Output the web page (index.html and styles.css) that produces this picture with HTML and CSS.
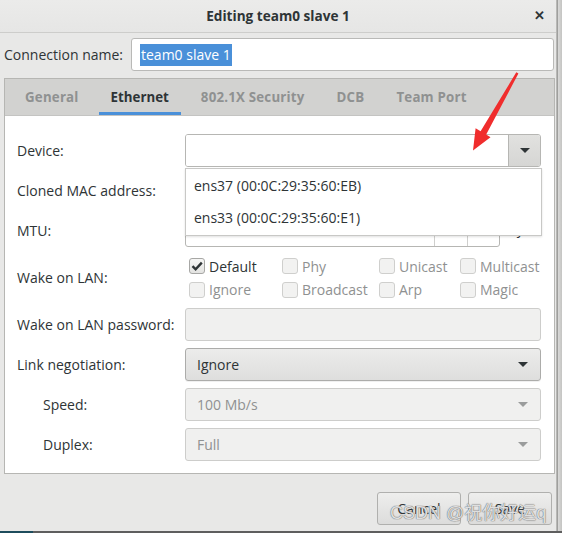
FILE: index.html
```html
<!DOCTYPE html>
<html>
<head>
<meta charset="utf-8">
<link rel="stylesheet" href="styles.css">
</head>
<body>
<div class="screen">
  <div class="window">
    <header class="titlebar">
      <span class="title">Editing team0 slave 1</span>
      <span class="close">✕</span>
    </header>
    <div class="body">
      <div class="conn-row">
        <span class="conn-label">Connection name:</span>
        <div class="entry name-entry"><span class="sel">team0 slave 1</span></div>
      </div>
      <div class="notebook">
        <div class="tabs">
          <span class="tab">General</span>
          <span class="tab active">Ethernet</span>
          <span class="tab">802.1X Security</span>
          <span class="tab">DCB</span>
          <span class="tab">Team Port</span>
        </div>
        <div class="page">
          <div class="form">
            <span class="lbl">Device:</span>
            <div class="combo-wrap">
              <div class="combo-entry">
                <div class="ce-text"></div>
                <div class="ce-btn"><span class="arrow"></span></div>
              </div>
              <div class="popup">
                <div class="item">ens37 (00:0C:29:35:60:EB)</div>
                <div class="item">ens33 (00:0C:29:35:60:E1)</div>
              </div>
            </div>

            <span class="lbl">Cloned MAC address:</span>
            <div class="entry plain"></div>

            <span class="lbl">MTU:</span>
            <div class="mtu">
              <div class="spin">
                <div class="spin-text"></div>
                <div class="spin-btn"></div>
                <div class="spin-btn"></div>
              </div>
              <span class="unit">bytes</span>
            </div>

            <span class="lbl">Wake on LAN:</span>
            <div class="checks">
              <label class="chk on"><span class="box"><svg viewBox="0 0 16 16" width="16" height="16"><path d="M3.5 8.2 L6.6 11.3 L12.8 4.6" fill="none" stroke="#2e3436" stroke-width="2.4"/></svg></span>Default</label>
              <label class="chk off"><span class="box"></span>Phy</label>
              <label class="chk off"><span class="box"></span>Unicast</label>
              <label class="chk off"><span class="box"></span>Multicast</label>
              <label class="chk off"><span class="box"></span>Ignore</label>
              <label class="chk off"><span class="box"></span>Broadcast</label>
              <label class="chk off"><span class="box"></span>Arp</label>
              <label class="chk off"><span class="box"></span>Magic</label>
            </div>

            <span class="lbl">Wake on LAN password:</span>
            <div class="entry disabled"></div>

            <span class="lbl">Link negotiation:</span>
            <div class="combo active-combo"><span>Ignore</span><span class="arrow"></span></div>

            <span class="lbl sub">Speed:</span>
            <div class="combo dis-combo"><span>100 Mb/s</span><span class="arrow"></span></div>

            <span class="lbl sub">Duplex:</span>
            <div class="combo dis-combo"><span>Full</span><span class="arrow"></span></div>
          </div>
        </div>
      </div>
      <div class="actions">
        <div class="btn">Cancel</div>
        <div class="btn">Save</div>
      </div>
    </div>
    <div class="watermark">CSDN @祝你好运q</div>
    <svg class="annot" width="562" height="533" viewBox="0 0 562 533">
      <path d="M516.3 72.3 L518.4 73.6 L486.2 134.4 L490.5 137.2 L473 150.5 L475.6 128.2 L480.6 131.2 Z" fill="#f02d2d"/>
    </svg>
  </div>
  <div class="edge"></div>
</div>
<div class="bottom-strip"><span class="teal"></span></div>
</body>
</html>
```

FILE: styles.css
```css
* { box-sizing: border-box; }
html, body { margin: 0; padding: 0; }
body {
  width: 562px;
  height: 533px;
  overflow: hidden;
  background: #cfcfcf;
  font-family: "Open Sans", "Noto Sans", "Noto Sans CJK SC", sans-serif;
  font-size: 14px;
  color: #2e3436;
}
.screen { display: flex; height: 531px; }
.window {
  position: relative;
  width: 557px;
  height: 531px;
  background: #e8e8e7;
  border-right: 1px solid #b8b8b6;
}
.edge {
  width: 5px;
  background: linear-gradient(to right, #d9d9d8, #c4c4c2);
  border-left: 1px solid #9f9f9d;
}
.bottom-strip {
  height: 2px;
  background: #5e5e5e;
  display: flex;
}
.bottom-strip .teal { width: 33px; background: #1d4c5c; }

.titlebar {
  height: 33px;
  border-bottom: 1px solid #cdcdcb;
  background: linear-gradient(#ebebea, #e6e6e5);
  display: flex;
  align-items: center;
  justify-content: center;
  position: relative;
}
.title { font-weight: 700; font-size: 13.6px; color: #2e3436; margin-top: -2px; }
.close {
  position: absolute;
  right: 11px;
  top: 6px;
  font-size: 13px;
  font-weight: 700;
  color: #2e3436;
}

.body { padding: 5px 2px 0 4px; }

.conn-row { display: flex; align-items: center; height: 33px; }
.conn-label { width: 127px; }
.entry {
  background: #fff;
  border: 1px solid #b9b9b7;
  border-radius: 3px;
  height: 33px;
}
.name-entry { flex: 1; display: flex; align-items: center; padding-left: 8px; }
.sel { background: #4a90d9; color: #fff; font-size: 14px; line-height: 22px; padding: 0 1px; }

.notebook {
  margin-top: 7px;
  width: 551px;
  border: 1px solid #b6b6b3;
  background: #fff;
}
.tabs {
  height: 37px;
  background: #d2d2d0;
  border-bottom: 1px solid #c4c4c2;
  display: flex;
  padding-left: 4px;
}
.tab {
  margin: 0 4px;
  padding: 0 12px;
  font-weight: 700;
  color: #8f9191;
  font-size: 13.3px;
  letter-spacing: 0.2px;
  display: flex;
  align-items: center;
  border-bottom: 3px solid transparent;
  padding-top: 2px;
}
.tab.active { color: #2e3436; border-bottom-color: #4a90d9; letter-spacing: 0; }

.page { padding: 18px 13px 12px 12px; }
.form {
  display: grid;
  grid-template-columns: 168px minmax(0, 1fr);
  grid-template-rows: 33px 33px 33px 47px 33px 33px 33px 33px;
  row-gap: 7px;
  align-items: center;
}
.lbl { white-space: nowrap; }
.lbl.sub { padding-left: 26px; }

.combo-wrap { position: relative; z-index: 10; height: 33px; }
.combo-entry {
  display: flex;
  height: 33px;
  border: 1px solid #b6b6b3;
  border-radius: 3px;
  overflow: hidden;
}
.ce-text { flex: 1; background: #fff; }
.ce-btn {
  width: 32px;
  background: linear-gradient(#e1e1df, #d6d6d4);
  border-left: 1px solid #b6b6b3;
  display: flex;
  align-items: center;
  justify-content: center;
}
.arrow {
  width: 0; height: 0;
  border-left: 5px solid transparent;
  border-right: 5px solid transparent;
  border-top: 5px solid #2e3436;
}
.popup {
  position: absolute;
  left: 0;
  top: 34px;
  width: 357px;
  background: #fff;
  border: 1px solid #c8c8c6;
  box-shadow: 0 1px 2px rgba(0,0,0,0.12);
  z-index: 10;
  padding: 1px 0;
}
.item { height: 32px; line-height: 32px; padding-left: 8px; }

.mtu { display: flex; align-items: center; height: 33px; }
.spin {
  width: 315px;
  height: 33px;
  display: flex;
  flex: none;
  border: 1px solid #b6b6b3;
  border-radius: 3px;
  background: #fff;
}
.spin-text { flex: 1; }
.spin-btn { width: 33px; border-left: 1px solid #cfcfcd; }
.spin-btn + .spin-btn { width: 32px; }
.unit { margin-left: 9px; margin-bottom: 5px; letter-spacing: -0.8px; white-space: nowrap; }

.checks {
  height: 47px;
  display: grid;
  grid-template-columns: 93px 97px 81px auto;
  grid-template-rows: 24px 23px;
  padding-left: 4px;
}
.chk { display: flex; align-items: center; gap: 4px; white-space: nowrap; }
.box {
  width: 16px; height: 16px;
  border-radius: 3px;
  border: 1px solid #a7a7a5;
  background: linear-gradient(#f6f6f5, #e3e3e1);
  display: flex;
  align-items: center;
  justify-content: center;
  flex: none;
}
.box svg { display: block; margin: -1px; }
.chk.off { color: #8f9191; }
.chk.off .box { border-color: #cfcfcd; background: #f2f2f1; }

.entry.disabled { background: #f0f0ef; border-color: #cdcdcb; }

.combo {
  height: 33px;
  border-radius: 3px;
  display: flex;
  align-items: center;
  justify-content: space-between;
  padding: 0 12px 0 11px;
}
.active-combo {
  background: linear-gradient(#ececeb, #dededd);
  border: 1px solid #acacaa;
  box-shadow: 0 1px 0 rgba(0,0,0,0.06);
}
.dis-combo {
  background: #f0f0ef;
  border: 1px solid #cdcdcb;
  color: #8f9191;
}
.dis-combo .arrow { border-top-color: #9a9c9c; }

.actions {
  display: flex;
  justify-content: flex-end;
  gap: 7px;
  margin-top: 18px;
  padding-right: 2px;
}
.btn {
  width: 84px;
  height: 33px;
  border: 1px solid #b0b0ae;
  border-radius: 3px;
  background: linear-gradient(#eeeeed, #dcdcdb);
  display: flex;
  align-items: center;
  justify-content: center;
  color: #2e3436;
}

.watermark {
  position: absolute;
  left: 390px;
  top: 502px;
  font-size: 18px;
  line-height: 22px;
  font-family: "Liberation Sans", "Noto Sans CJK SC", sans-serif;
  color: rgba(255,255,255,0.78);
  text-shadow: 0 0 1px #6b6b6b, 0 0 1px #6b6b6b;
  white-space: nowrap;
  letter-spacing: 0;
}
.annot { position: absolute; left: 0; top: 0; pointer-events: none; z-index: 20; }
```
